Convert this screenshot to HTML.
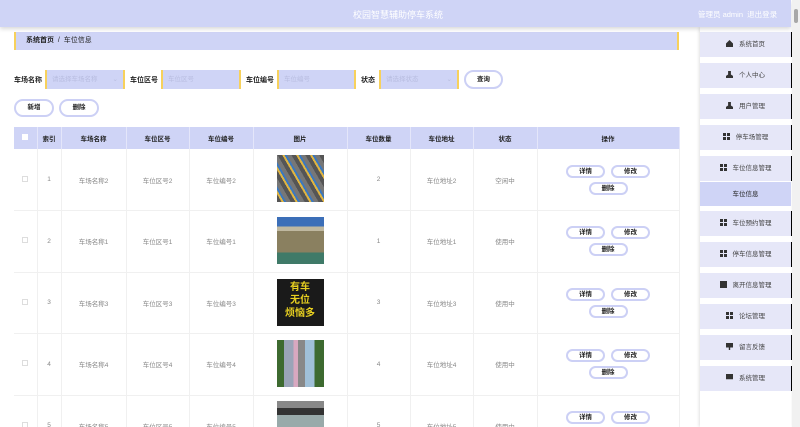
<!DOCTYPE html>
<html style="width:800px;height:427px;overflow:hidden"><head><meta charset="utf-8">
<style>
*{box-sizing:border-box;margin:0;padding:0}
body{width:800px;height:427px;overflow:hidden;background:#fff;font-family:"Liberation Sans","Noto Sans CJK SC",sans-serif;font-size:7px;color:#333;position:relative}
.abs{position:absolute}
.hdr{left:0;top:0;width:791px;height:27px;background:#cfd4f6;box-shadow:0 2px 4px rgba(0,0,0,.15);z-index:3}
.hdr .t{position:absolute;left:0;width:796px;top:8px;text-align:center;color:#fff;font-size:9px}
.hdr .r{position:absolute;left:698px;top:9px;color:#fff;font-size:7.5px;white-space:nowrap}
.sb{left:792px;top:0;width:8px;height:427px;background:#f1f1f1;z-index:4}
.sb i{position:absolute;left:2px;top:9px;width:4px;height:14px;background:#a8a8a8;border-radius:2px}
.bc{left:14px;top:32px;width:665px;height:18px;background:#cfd4f6;border-left:2px solid #f7d15c;border-right:2px solid #f7d15c;font-size:7px;line-height:18px;padding-left:10px;color:#222}
.lbl{font-size:7px;font-weight:bold;color:#222;top:75px}
.inp{top:70px;height:19px;background:#cfd4f6;border-left:2px solid #f7d15c;border-right:2px solid #f7d15c;color:#b8bde0;font-size:6.5px;line-height:19px;padding-left:5px}
.btn{border:2px solid #ccd0f5;border-radius:10px;background:#fff;text-align:center;font-weight:bold;color:#222;font-size:6.5px}
.sm{width:39px;height:13px;line-height:9px;border-radius:7px}
.tw{position:absolute;left:0;top:0;width:700px;height:427px;overflow:hidden}
table{position:absolute;left:14px;top:127px;width:665px;border-collapse:collapse;table-layout:fixed}
th{background:#cfd4f6;height:22px;font-size:6.5px;color:#222;border-right:1px solid #e4e6fa}
td{height:61.5px;text-align:center;color:#888;font-size:6.5px;border-right:1px solid #f0f0f0;border-bottom:1px solid #f0f0f0;vertical-align:middle}
.cb{display:inline-block;width:6px;height:6px;border:1px solid #ddd;background:#fff}
.img{display:inline-block;width:47px;height:47px}
.side{left:700px;top:27px;width:91px;height:400px;background:#fff;box-shadow:-1px 0 3px rgba(0,0,0,.12)}
.it{position:absolute;left:700px;width:91px;height:25px;background:#e6e7f8;font-size:6.5px;color:#444;line-height:25px;text-align:center}
.bar{position:absolute;left:791px;width:4px;height:25px;background:#000}
.ic{display:inline-block;width:7px;height:7px;background:#333;margin-right:6px;vertical-align:-1px}
.grid{background:linear-gradient(#333,#333) 0 0/3px 3px no-repeat,linear-gradient(#333,#333) 4px 0/3px 3px no-repeat,linear-gradient(#333,#333) 0 4px/3px 3px no-repeat,linear-gradient(#333,#333) 4px 4px/3px 3px no-repeat;background-color:transparent}
</style></head><body>
<div class="abs hdr"><div class="t">校园智慧辅助停车系统</div><div class="r">管理员 admin &nbsp;退出登录</div></div>
<div class="abs sb"><i></i></div>

<div class="abs bc"><b>系统首页</b> &nbsp;/&nbsp; 车位信息</div>

<div class="abs lbl" style="left:14px">车场名称</div>
<div class="abs inp" style="left:45px;width:80px">请选择车场名称<span style="position:absolute;right:5px">⌄</span></div>
<div class="abs lbl" style="left:130px">车位区号</div>
<div class="abs inp" style="left:161px;width:80px">车位区号</div>
<div class="abs lbl" style="left:246px">车位编号</div>
<div class="abs inp" style="left:277px;width:79px">车位编号</div>
<div class="abs lbl" style="left:361px">状态</div>
<div class="abs inp" style="left:379px;width:80px">请选择状态<span style="position:absolute;right:5px">⌄</span></div>
<div class="abs btn" style="left:464px;top:70px;width:39px;height:19px;line-height:15px">查询</div>
<div class="abs btn" style="left:14px;top:99px;width:40px;height:18px;line-height:14px">新增</div>
<div class="abs btn" style="left:59px;top:99px;width:40px;height:18px;line-height:14px">删除</div>

<div class="tw">
<table>
<colgroup><col style="width:23px"><col style="width:24px"><col style="width:65px"><col style="width:63px"><col style="width:64px"><col style="width:94px"><col style="width:63px"><col style="width:63px"><col style="width:64px"><col style="width:142px"></colgroup>
<tr><th><span class="cb" style="border:none"></span></th><th>索引</th><th>车场名称</th><th>车位区号</th><th>车位编号</th><th>图片</th><th>车位数量</th><th>车位地址</th><th>状态</th><th>操作</th></tr>
<tr><td><span class="cb"></span></td><td>1</td><td>车场名称2</td><td>车位区号2</td><td>车位编号2</td><td><span class="img" style="background:repeating-linear-gradient(60deg,#555 0 4px,#e0b440 4px 6px,#3a78c0 6px 8px,#777 8px 12px)"></span></td><td>2</td><td>车位地址2</td><td>空闲中</td><td>OPS</td></tr>
<tr><td><span class="cb"></span></td><td>2</td><td>车场名称1</td><td>车位区号1</td><td>车位编号1</td><td><span class="img" style="background:linear-gradient(#3c6fb8 0 20%,#bfb8a0 20% 30%,#8a8060 30% 75%,#3f7a68 75%)"></span></td><td>1</td><td>车位地址1</td><td>使用中</td><td>OPS</td></tr>
<tr><td><span class="cb"></span></td><td>3</td><td>车场名称3</td><td>车位区号3</td><td>车位编号3</td><td><span class="img" style="background:#1a1a1a;color:#e8d020;font-weight:bold;font-size:10px;line-height:13px;padding-top:2px">有车<br>无位<br>烦恼多</span></td><td>3</td><td>车位地址3</td><td>使用中</td><td>OPS</td></tr>
<tr><td><span class="cb"></span></td><td>4</td><td>车场名称4</td><td>车位区号4</td><td>车位编号4</td><td><span class="img" style="background:linear-gradient(90deg,#3d6a30 0 15%,#9aa4b8 15% 35%,#d8a8c0 35% 45%,#888 45% 60%,#a0c0d8 60% 80%,#3d6a30 80%)"></span></td><td>4</td><td>车位地址4</td><td>使用中</td><td>OPS</td></tr>
<tr><td><span class="cb"></span></td><td>5</td><td>车场名称5</td><td>车位区号5</td><td>车位编号5</td><td><span class="img" style="background:linear-gradient(#888 0 15%,#333 15% 30%,#9aa 30% 100%)"></span></td><td>5</td><td>车位地址5</td><td>使用中</td><td>OPS</td></tr>
</table>
</div>

<div class="abs side"></div>
<div class="it" style="top:32px"><span class="ic" style="clip-path:polygon(50% 0,100% 50%,100% 100%,0 100%,0 50%)"></span>系统首页</div><div class="bar" style="top:32px"></div>
<div class="it" style="top:63px"><span class="ic" style="clip-path:polygon(30% 0,70% 0,70% 50%,100% 70%,100% 100%,0 100%,0 70%,30% 50%)"></span>个人中心</div><div class="bar" style="top:63px"></div>
<div class="it" style="top:94px"><span class="ic" style="clip-path:polygon(30% 0,70% 0,70% 50%,100% 70%,100% 100%,0 100%,0 70%,30% 50%)"></span>用户管理</div><div class="bar" style="top:94px"></div>
<div class="it" style="top:125px"><span class="ic grid"></span>停车场管理</div><div class="bar" style="top:125px"></div>
<div class="it" style="top:156px"><span class="ic grid"></span>车位信息管理</div><div class="bar" style="top:156px"></div>
<div class="it" style="top:182px;height:24px;background:#cfd4f6;color:#222">车位信息</div>
<div class="it" style="top:211px"><span class="ic grid"></span>车位预约管理</div><div class="bar" style="top:211px"></div>
<div class="it" style="top:242px"><span class="ic grid"></span>停车信息管理</div><div class="bar" style="top:242px"></div>
<div class="it" style="top:273px"><span class="ic"></span>离开信息管理</div><div class="bar" style="top:273px"></div>
<div class="it" style="top:304px"><span class="ic grid"></span>论坛管理</div><div class="bar" style="top:304px"></div>
<div class="it" style="top:335px"><span class="ic" style="clip-path:polygon(0 0,100% 0,100% 65%,60% 65%,60% 100%,40% 100%,40% 65%,0 65%)"></span>留言反馈</div><div class="bar" style="top:335px"></div>
<div class="it" style="top:366px"><span class="ic" style="clip-path:polygon(0 0,100% 0,100% 75%,0 75%)"></span>系统管理</div><div class="bar" style="top:366px"></div>

<script>
document.querySelectorAll('td').forEach(function(td){if(td.textContent==='OPS'){td.innerHTML='<div style="width:88px;margin:0 auto;display:flex;flex-wrap:wrap;justify-content:center;gap:4px 6px"><div class="btn sm">详情</div><div class="btn sm">修改</div><div class="btn sm">删除</div></div>';}});
</script>
</body></html>
